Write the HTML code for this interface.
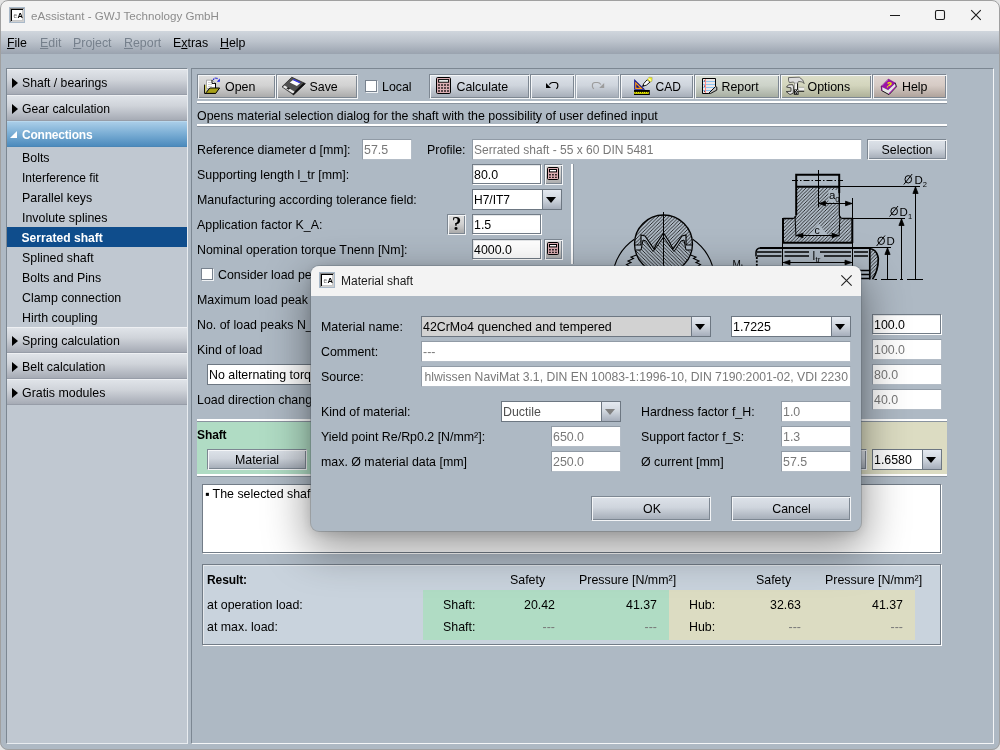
<!DOCTYPE html>
<html><head><meta charset="utf-8"><title>eAssistant - GWJ Technology GmbH</title>
<style>
*{box-sizing:border-box;margin:0;padding:0}
html,body{width:1000px;height:750px;overflow:hidden;background:#e4e4e4}
body{font-family:"Liberation Sans",Arial,sans-serif;font-size:12.4px;color:#000;position:relative}
#win{will-change:transform;position:absolute;left:0;top:0;width:1000px;height:750px;border-radius:8px;overflow:hidden;background:#aeb9c4}
#winb{position:absolute;left:0;top:0;width:1000px;height:750px;border-radius:8px;border:1px solid #a0a0a0;z-index:50;pointer-events:none}
.a{position:absolute;white-space:nowrap}
#title{left:0;top:0;width:1000px;height:31px;background:#f3f3f3}
#menu{left:0;top:31px;width:1000px;height:23px;background:linear-gradient(#d0d6dd,#bcc3cc 45%,#9aa3af)}
#menu span{position:absolute;top:5px;font-size:12.4px}
#menu u{text-decoration:underline;text-underline-offset:1px}
.dis{color:#76808c}
/* sidebar */
#side{left:6px;top:68px;width:182px;height:676px;background:#c0c8d1;border:1px solid;border-color:#7c8792 #e8ecf0 #e8ecf0 #7c8792}
.sh{position:absolute;left:0;width:180px;height:26px;background:linear-gradient(#dfe3e8,#d0d4da 40%,#a6abb5);border-top:1px solid #eef0f3;border-bottom:1px solid #979da8;line-height:26px;padding-left:15px;font-size:12.4px}
.sh.sel{font-size:12px;letter-spacing:-.2px;background:linear-gradient(#a9cde8,#7eb0d6 45%,#4c8bbd);color:#fff;font-weight:bold;border-top-color:#b8d8ee;border-bottom-color:#4a86b6}
.si{position:absolute;left:0;width:180px;height:20px;line-height:23.5px;padding-left:15px;font-size:12.4px}
.si.sel{font-size:12.1px;padding-left:14.5px;background:#0f4d8c;color:#fff;font-weight:bold}
.tri{position:absolute;left:5px;top:7.5px;width:0;height:0;border-left:6px solid #000;border-top:5px solid transparent;border-bottom:5px solid transparent}
.tri2{position:absolute;left:3px;top:9px;width:0;height:0;border-bottom:7.5px solid #fff;border-left:7.5px solid transparent}
/* main */
#main{left:191px;top:68px;width:803px;height:676px;border:1px solid;border-color:#7c8792 #f4f6f8 #f4f6f8 #7c8792}
.btn{position:absolute;height:25px;border:1px solid;border-color:#7d8792 #f2f4f6 #f2f4f6 #7d8792;box-shadow:inset 1px 1px 0 #f4f6f8,inset -1px -1px 0 #7d8792;line-height:23px;text-align:center}
.g0{background:linear-gradient(#e0e0e0,#d2d2d2 45%,#a8a8a8)}
.g1{background:linear-gradient(#dde2e9,#cfd5dd 45%,#a3abb6)}
.g2{background:linear-gradient(#d9ded6,#cdd3c9 45%,#a4ab9f)}
.g3{background:linear-gradient(#dddfca,#d3d5bd 45%,#abae96)}
.g4{background:linear-gradient(#e0d6d2,#d6cbc5 45%,#ac9f98)}
.sep{position:absolute;height:3px;border-top:2px solid #fff;border-bottom:1px solid #8a949f}
.tf{position:absolute;height:21px;background:#fff;border:1px solid;border-color:#727c87 #fff #fff #727c87;box-shadow:inset -1px -1px 0 #727c87,inset 1px 1px 0 #e4e6e8;line-height:20px;padding-left:1px;overflow:hidden}
.tf.d{color:#787878;border-color:#919ba6 #b4bdc7 #b4bdc7 #919ba6;box-shadow:none}
.lb{position:absolute;white-space:nowrap;line-height:20px;height:20px;margin-top:1px}

.bl{position:absolute;top:1px}
.bd{border-color:#98a2ad #f2f4f6 #f2f4f6 #98a2ad;box-shadow:inset 1px 1px 0 #f4f6f8,inset -1px -1px 0 #98a2ad}
.cb{position:absolute;width:13px;height:13px;background:#fff;border:1px solid;border-color:#78828e #eef1f4 #eef1f4 #78828e;box-shadow:inset -1px -1px 0 #78828e}
.sb{width:19px;height:21px}
.q{font-family:"Liberation Serif",serif;font-weight:bold;font-size:18.5px;line-height:19px}
.co{position:absolute;height:21px;background:#fff;border:1px solid #6d7782;line-height:21px;padding-left:1px;white-space:nowrap;overflow:hidden}
.co i{position:absolute;right:0;top:0;width:19px;height:19px;border-left:1px solid #6d7782;background:linear-gradient(#e4e9f0,#d2d8e0 45%,#a6aebb)}
.co i:after{content:"";position:absolute;left:3px;top:7px;border-top:6px solid #000;border-left:5.5px solid transparent;border-right:5.5px solid transparent}
.vsep{position:absolute;width:3px;border-left:2px solid #fff;border-right:1px solid #8a949f}
.r{text-align:right}
.g{color:#777}

#dlg{left:311px;top:266px;width:550px;height:265px;background:#aeb9c4;border-radius:8px;box-shadow:0 0 0 1px rgba(90,100,110,.35),0 15px 44px 4px rgba(0,0,0,.40),0 2px 12px rgba(0,0,0,.13);z-index:20}
#dtitle{left:0;top:0;width:550px;height:30px;background:#f3f3f3;border-radius:8px 8px 0 0}
.dd{color:#505050}
.dd i:after{border-top-color:#808080}

.appico{width:16px;height:16px;border:1px solid #a9b9c9;background:#fff;box-shadow:inset 1px 1px 0 #8a8a8a,inset -1px -1px 0 #d0d0d0,inset 2px 2px 0 #000,inset -2px -2px 0 #c8c8c8;font-size:7px;line-height:14px;white-space:nowrap;overflow:hidden}
.appico b{position:absolute;top:1px;font-family:"Liberation Sans",sans-serif}
.appico b:first-child{left:3.5px;color:#666;font-weight:normal;font-size:6.5px}
.appico b:last-child{left:7.5px;color:#000;font-size:7.5px}
</style></head><body>
<div id="win">
<div id="title" class="a">
<div class="a appico" style="left:9px;top:7px"><b>e</b><b>A</b></div>
<span class="a" style="left:31px;top:0;line-height:31px;font-size:11.6px;color:#8c8c8c">eAssistant - GWJ Technology GmbH</span>
<svg class="a" style="left:880px;top:0" width="120" height="31" viewBox="880 0 120 31"><path d="M890 15.5h10" stroke="#1a1a1a" stroke-width="1"/><rect x="935.5" y="10.5" width="9" height="9" rx="1.5" fill="none" stroke="#1a1a1a" stroke-width="1.1"/><path d="M971.2 10.2l9.6 9.6M980.8 10.2l-9.6 9.6" stroke="#1a1a1a" stroke-width="1.1"/></svg>
</div>
<div id="menu" class="a"><span style="left:7px"><u>F</u>ile</span><span class="dis" style="left:40px"><u>E</u>dit</span><span class="dis" style="left:73px"><u>P</u>roject</span><span class="dis" style="left:124px"><u>R</u>eport</span><span style="left:173px">E<u>x</u>tras</span><span style="left:220px"><u>H</u>elp</span></div>
<div id="side" class="a">
<div class="sh" style="top:0;font-size:12.2px"><i class="tri"></i>Shaft / bearings</div>
<div class="sh" style="top:26px;font-size:12.2px"><i class="tri"></i>Gear calculation</div>
<div class="sh sel" style="top:52px"><i class="tri2"></i>Connections</div>
<div class="si" style="top:78px">Bolts</div>
<div class="si" style="top:98px;font-size:12px">Interference fit</div>
<div class="si" style="top:118px">Parallel keys</div>
<div class="si" style="top:138px">Involute splines</div>
<div class="si sel" style="top:158px">Serrated shaft</div>
<div class="si" style="top:178px">Splined shaft</div>
<div class="si" style="top:198px">Bolts and Pins</div>
<div class="si" style="top:218px">Clamp connection</div>
<div class="si" style="top:238px">Hirth coupling</div>
<div class="sh" style="top:258px"><i class="tri"></i>Spring calculation</div>
<div class="sh" style="top:284px"><i class="tri"></i>Belt calculation</div>
<div class="sh" style="top:310px"><i class="tri"></i>Gratis modules</div>
</div>
<div id="main" class="a"></div>
<!--MAIN-->
<!-- toolbar -->
<div class="btn g0" style="left:197px;top:74px;width:79px"><span class="bl" style="left:27px">Open</span></div>
<div class="btn g0" style="left:276px;top:74px;width:82px"><span class="bl" style="left:32.5px">Save</span></div>
<div class="cb" style="left:365px;top:80px"></div><div class="lb" style="left:382px;top:76px">Local</div>
<div class="btn g1" style="left:429px;top:74px;width:101px"><span class="bl" style="left:26.5px">Calculate</span></div>
<div class="btn g1" style="left:530px;top:74px;width:45px"></div>
<div class="btn g1 bd" style="left:575px;top:74px;width:45px"></div>
<div class="btn g1" style="left:620px;top:74px;width:74px"><span class="bl" style="left:34.5px;font-size:12px">CAD</span></div>
<div class="btn g2" style="left:694px;top:74px;width:86px"><span class="bl" style="left:26.5px">Report</span></div>
<div class="btn g3" style="left:780px;top:74px;width:92px"><span class="bl" style="left:26.5px">Options</span></div>
<div class="btn g4" style="left:872px;top:74px;width:75px"><span class="bl" style="left:29px">Help</span></div>
<div class="sep" style="left:197px;top:101px;width:750px"></div>
<div class="lb" style="left:197px;top:105px">Opens material selection dialog for the shaft with the possibility of user defined input</div>
<div class="sep" style="left:197px;top:124px;width:750px"></div>
<!-- form -->
<div class="lb" style="left:197px;top:139px">Reference diameter d [mm]:</div>
<div class="tf d" style="left:362px;top:139px;width:50px">57.5</div>
<div class="lb" style="left:427px;top:139px">Profile:</div>
<div class="tf d" style="left:472px;top:139px;width:390px;font-size:12px">Serrated shaft - 55 x 60 DIN 5481</div>
<div class="btn g1" style="left:867px;top:139px;width:80px;height:21px;line-height:20px">Selection</div>
<div class="lb" style="left:197px;top:164px">Supporting length l_tr [mm]:</div>
<div class="tf" style="left:472px;top:164px;width:70px">80.0</div>
<div class="btn g0 sb" style="left:544px;top:164px"></div>
<div class="lb" style="left:197px;top:189px">Manufacturing according tolerance field:</div>
<div class="co" style="left:472px;top:189px;width:90px;font-size:12px">H7/IT7<i></i></div>
<div class="lb" style="left:197px;top:214px">Application factor K_A:</div>
<div class="btn g0 sb q" style="left:447px;top:214px">?</div>
<div class="tf" style="left:472px;top:214px;width:70px">1.5</div>
<div class="lb" style="left:197px;top:239px">Nominal operation torque Tnenn [Nm]:</div>
<div class="tf" style="left:472px;top:239px;width:70px">4000.0</div>
<div class="btn g0 sb" style="left:544px;top:239px"></div>
<div class="cb" style="left:201px;top:268px"></div><div class="lb" style="left:218px;top:264px">Consider load peaks</div>
<div class="lb" style="left:197px;top:289px">Maximum load peak Tmax [Nm]:</div>
<div class="lb" style="left:197px;top:314px">No. of load peaks N_L:</div>
<div class="lb" style="left:197px;top:339px">Kind of load</div>
<div class="co" style="left:207px;top:364px;width:200px">No alternating torque<i></i></div>
<div class="lb" style="left:197px;top:389px">Load direction changes N_W:</div>
<div class="vsep" style="left:571px;top:164px;height:100px"></div>
<div class="tf" style="left:872px;top:314px;width:70px">100.0</div>
<div class="tf d" style="left:872px;top:339px;width:70px">100.0</div>
<div class="tf d" style="left:872px;top:364px;width:70px">80.0</div>
<div class="tf d" style="left:872px;top:389px;width:70px">40.0</div>
<!-- shaft/hub panels -->
<div class="a" style="left:197px;top:419px;width:375px;height:57px;background:#b0dcc4;border-top:2px solid #fff;border-bottom:2px solid #fff"></div>
<div class="a" style="left:572px;top:419px;width:375px;height:57px;background:#dcdcc2;border-top:2px solid #fff;border-bottom:2px solid #fff"></div>
<div class="a" style="left:197px;top:421px;width:750px;height:1px;background:#8a949f"></div>
<div class="a" style="left:197px;top:476px;width:750px;height:1px;background:#8a949f"></div>
<div class="lb" style="left:197px;top:424px;font-weight:bold;font-size:12px;letter-spacing:-.1px">Shaft</div>
<div class="lb" style="left:577px;top:424px;font-weight:bold;font-size:12px;letter-spacing:-.1px">Hub</div>
<div class="btn g1" style="left:207px;top:449px;width:100px;height:21px;line-height:20px">Material</div>
<div class="btn g1" style="left:767px;top:449px;width:100px;height:21px;line-height:20px">Material</div>
<div class="co" style="left:872px;top:449px;width:70px">1.6580<i></i></div>
<!-- text area -->
<div class="a" style="left:202px;top:484px;width:740px;height:70px;background:#fff;border:1px solid;border-color:#727c87 #fff #fff #727c87;box-shadow:inset -1px -1px 0 #727c87;padding:2.4px 0 0 2px;line-height:14px">▪ The selected shaft material is not suitable for the given conditions</div>
<!-- result -->
<div class="a" style="left:202px;top:564px;width:740px;height:82px;background:#c9d3dd;border:1px solid;border-color:#727c87 #fff #fff #727c87;box-shadow:inset -1px -1px 0 #727c87,inset 1px 1px 0 #e4e8ec"></div>
<div class="a" style="left:423px;top:590px;width:246px;height:50px;background:#b0dcc4"></div>
<div class="a" style="left:669px;top:590px;width:246px;height:50px;background:#dcdcc2"></div>
<div class="lb" style="left:207px;top:569px;font-weight:bold;font-size:12px;letter-spacing:-.1px">Result:</div>
<div class="lb" style="left:207px;top:594px">at operation load:</div>
<div class="lb" style="left:207px;top:616px">at max. load:</div>
<div class="lb" style="left:510px;top:569px">Safety</div>
<div class="lb" style="left:579px;top:569px">Pressure [N/mm²]</div>
<div class="lb" style="left:756px;top:569px">Safety</div>
<div class="lb" style="left:825px;top:569px">Pressure [N/mm²]</div>
<div class="lb" style="left:443px;top:594px">Shaft:</div>
<div class="lb" style="left:443px;top:616px">Shaft:</div>
<div class="lb r" style="left:455px;top:594px;width:100px">20.42</div>
<div class="lb r" style="left:557px;top:594px;width:100px">41.37</div>
<div class="lb r g" style="left:455px;top:616px;width:100px">---</div>
<div class="lb r g" style="left:557px;top:616px;width:100px">---</div>
<div class="lb" style="left:689px;top:594px">Hub:</div>
<div class="lb" style="left:689px;top:616px">Hub:</div>
<div class="lb r" style="left:701px;top:594px;width:100px">32.63</div>
<div class="lb r" style="left:803px;top:594px;width:100px">41.37</div>
<div class="lb r g" style="left:701px;top:616px;width:100px">---</div>
<div class="lb r g" style="left:803px;top:616px;width:100px">---</div>
<!--/MAIN-->
<!--DRAW-->
<svg class="a" style="left:572px;top:160px;z-index:4" width="378" height="125" viewBox="572 160 378 125">
<defs>
<pattern id="h1" width="3.5" height="3.5" patternUnits="userSpaceOnUse"><path d="M-1 4.5L4.5 -1M-1 1L1 -1M2.5 4.5L4.5 2.5" stroke="#000" stroke-width=".74"/></pattern>
<pattern id="h2" width="3.5" height="3.5" patternUnits="userSpaceOnUse"><path d="M-1 -1L4.5 4.5M-1 2.5L1 4.5M2.5 -1L4.5 1" stroke="#000" stroke-width=".74"/></pattern>
<clipPath id="cc"><circle cx="663.5" cy="244" r="29"/></clipPath>
</defs>
<g fill="none" stroke="#000" stroke-width="1">
<!-- left cross-section -->
<g clip-path="url(#cc)">
<path d="M630 210h68v35h-5.500h-6.500v-10l-4 1l-9 13l-3-6l-6.500-10l-6.500 10l-3 6l-9-13l-4-1v10h-12z" fill="url(#h1)" stroke="none"/>
<path d="M630 280h68v-30h-12l-2-10l-3 1l-7 10.500l-3.500-4.500l-7-10l-7 10l-3.500 4.500l-7-10.500l-3-1l-2 10h-11z" fill="url(#h2)" stroke="none"/>
</g>
<circle cx="663.500" cy="244" r="29" stroke-width="1.300"/>
<path d="M634.500 245h6.500v-10l4 1l9 13l3-6l6.500-10l6.500 10l3 6l9-13l4-1v10h6.500" stroke-width="1.200"/>
<path d="M636 250h5l2-10l3 1l7 10.500l3.500-4.500l7-10l7 10l3.500 4.500l7-10.500l3-1l2 10h5" stroke-width="1"/>
<path d="M663.500 212v56" stroke-width="1"/>
<path d="M614.500 266A50.500 50.500 0 0 1 634.300 239.300M692.700 239.300A50.500 50.500 0 0 1 712.500 266" stroke-width="1.100"/>
<path d="M636.500 255l-5.500 2l2.500 1.500l-5.500 2.500l3 1.500l-4.500 2l3 2M690.500 255l5.500 2l-2.500 1.500l5.500 2.500l-3 1.500l4.500 2l-3 2" stroke-width="1.100"/>
<!-- hub section -->
<path d="M797 187.500h41.500v28l2.500 3h11v24h-68.500v-24h10l3.500-3z" fill="url(#h1)" stroke="none"/>
<path d="M809 235l9.500-11l9.500 11z" fill="#aeb9c4" stroke="none"/><path d="M828.500 190h9.500v12.500h-9.500z" fill="#aeb9c4" stroke="none"/>
<path d="M796.200 215V174.800h43V193" stroke-width="2"/>
<path d="M839.300 193v22q.5 3.500 4 3.500h9" stroke-width="1.300"/>
<path d="M796.200 215q-.5 3.500-4 3.500h-9" stroke-width="1.300"/>
<path d="M783 218v25M852.300 218v25" stroke-width="2"/>
<path d="M782 242.800h71" stroke-width="2"/>
<path d="M796 186.800h44" stroke-width="2"/>
<path d="M840 186.500h80M852 218.500h53M853 247.500h38" stroke-width="1"/>
<path d="M792 180.500h51" stroke-width="1" stroke-dasharray="6 2 1.500 2"/>
<path d="M818.500 170v37.500" stroke-width="1"/>
<path d="M795 216l1 20.500M840 216l-1 20.500" stroke-width="1"/>
<path d="M818.500 203.500h34M852.500 198v45M796 235.500h43" stroke-width="1"/>
<path d="M819 203.500l6.500-2.300v4.600zM852 203.500l-6.500-2.300v4.600zM796.500 235.500l6.500-2.300v4.600zM838.500 235.500l-6.500-2.300v4.600zM783.500 262.500l6.500-2.300v4.600zM851.500 262.500l-6.500-2.300v4.600z" fill="#000" stroke-width=".8"/>
<!-- shaft -->
<path d="M782.500 243v24M852.500 243v24" stroke-width="1"/>
<path d="M760 248h110" stroke-width="2"/>
<path d="M760 248q-3.500 .5-4 4v4.500" stroke-width="1.500"/>
<path d="M756.800 257v9" stroke-width="1.800" stroke-dasharray="2 1.500"/>
<path d="M757 252h24.500M784.500 252h24.500M820 252h31M854 252h14M757 256h24.500M784.500 256h24.500M824 256h27M854 256h14M854 270.500h15M854 274.500h15M854 278.500h16" stroke-width="1.700"/>
<path d="M783 262.500h69" stroke-width="1"/>
<path d="M869.800 248.500Q877 249.500 878.300 258.500Q878.300 271 872.500 279.300L869.800 279.300z" fill="url(#h1)" stroke="none"/>
<path d="M869.800 248.500Q877 249.500 878.300 258.500Q878.300 271 872.500 279.300" stroke-width="1.700"/>
<path d="M869.800 248v31.500" stroke-width="1.700"/>
<!-- dims -->
<path d="M915.500 187v92.500M901.500 219v60.500M887.500 248v31.500" stroke-width="1"/>
<path d="M915.500 186.800l2.600 6.700h-5.200zM901.500 218.800l2.600 6.700h-5.200zM887.500 247.800l2.600 6.700h-5.200z" fill="#000" stroke-width=".8"/>
<path d="M881 279.500h16M900 279.500h3M907 279.500h16M874.500 279.500h2.500" stroke-width="1"/>
</g>
<g font-family="Liberation Sans,sans-serif" fill="#000" font-size="11.500">
<text x="829" y="198.800" font-size="11.500">a</text><text x="835.200" y="201.800" font-size="8">0</text>
<text x="814.500" y="233.500" font-size="10.500">c</text>
<text x="812.500" y="259.500" font-size="12">l</text><text x="815.500" y="262" font-size="8">tr</text>
<text x="914.500" y="183.500">D</text><text x="922.800" y="186.500" font-size="7.500">2</text>
<text x="899.500" y="215.500">D</text><text x="908" y="218.500" font-size="7.500">1</text>
<text x="886.500" y="245">D</text>
<text x="732.500" y="267.500" font-size="10">M</text><text x="741" y="269" font-size="7">t</text>
</g>
<g fill="none" stroke="#000" stroke-width="1">
<ellipse cx="908.300" cy="179.300" rx="3.300" ry="3.700"/><path d="M903.800 184.500l8.400-10.500"/>
<ellipse cx="894.200" cy="211.300" rx="3.300" ry="3.700"/><path d="M889.600 216.500l8.400-10.500"/>
<ellipse cx="881.200" cy="240.800" rx="3.300" ry="3.700"/><path d="M876.600 246l8.400-10.500"/>
</g>
</svg>
<!--/DRAW-->
<!--ICONS-->
<svg class="a" style="left:0;top:0;z-index:5" width="1000" height="300" viewBox="0 0 1000 300" shape-rendering="geometricPrecision">
<!-- open -->
<g>
<path d="M206.5 80.2h5.7l3.3 3.2v5h-9z" fill="#fff" stroke="#8c8c8c" stroke-width=".7"/>
<path d="M208 82.5h3M208 84.5h4M208 86.5h4" stroke="#c4c4c4" stroke-width=".8"/>
<path d="M212 80v3.4h3.5" fill="none" stroke="#000" stroke-width="1"/><path d="M215.5 83v5" stroke="#000" stroke-width="1"/>
<path d="M204.6 84.6v8.9h11" fill="none" stroke="#000" stroke-width="1"/>
<path d="M205.6 85v7.6" stroke="#d8d050" stroke-width="1"/>
<path d="M206.2 92.6l3.6-4.6h9.8l-3.9 5.4h-9.4z" fill="#a8a018" stroke="#000" stroke-width="1" stroke-linejoin="round"/>
<path d="M213.2 79.8q2.2-3.2 4.8-.6" fill="none" stroke="#1c1cd8" stroke-width="1.2" stroke-dasharray="1.3 .6"/>
<path d="M219.9 78.6v3.2h-3.1z" fill="#2020f0"/>
</g>
<!-- save -->
<g>
<path d="M291.8 77.2l13.6 6.4l-11.8 11.2l-11.6-8z" fill="#505050" stroke="#2a2a2a" stroke-width=".8" stroke-linejoin="round"/>
<path d="M305.4 83.8l-11.8 11.2l-1.6-1.2l11.4-10.8z" fill="#111"/>
<path d="M293 80l7.1 3.3l-3.2 2.7l-7.1-3.4z" fill="#fff"/>
<path d="M293.6 78.9l7 3.3l-.9 1.1l-7-3.3z" fill="#3838f0"/>
<path d="M282.9 87l1.8-1.4l10 6.2l-1.7 1.7z" fill="#e8e8e8"/>
<path d="M286.3 88.2l1.8-1.2l2.2 1.4l-1.8 1.3z" fill="#222"/>
</g>
<!-- calculator big -->
<g>
<rect x="436.5" y="77.5" width="14" height="16" rx="1.2" fill="#dcaeb3" stroke="#000" stroke-width="1"/>
<rect x="438.6" y="79.6" width="10" height="2.6" fill="#fff" stroke="#000" stroke-width="1"/>
<path d="M438.2 85h1.6M441.2 85h1.6M444.2 85h1.6M447.2 85h1.6M438.2 88h1.6M441.2 88h1.6M444.2 88h1.6M447.2 88h1.6M438.2 91h1.6M441.2 91h1.6M444.2 91h1.6M447.2 91h1.6" stroke="#000" stroke-width="1.6"/>
</g>
<!-- undo -->
<path d="M546 83v5h5z" fill="#000"/>
<path d="M549.3 84.5Q550.8 82.5 552.6 82.5H555.2Q557.8 82.7 557.8 85V86.4Q557.6 87.8 556.4 88.9" fill="none" stroke="#000" stroke-width="1.15"/>
<!-- redo -->
<path d="M604.2 83v5h-5z" fill="#9c9c9c"/>
<path d="M600.9 84.5Q599.4 82.5 597.6 82.5H595Q592.4 82.7 592.4 85V86.4Q592.6 87.8 593.8 88.9" fill="none" stroke="#9c9c9c" stroke-width="1.15"/>
<!-- CAD -->
<g>
<path d="M634.2 79v10.8h11z" fill="#10108c"/>
<path d="M635.2 81.4v7.5h7.7z" fill="#ff9c18"/>
<path d="M636.3 84.3v3.5h3.6z" fill="#10108c"/>
<rect x="634" y="90" width="15.8" height="5" fill="#000"/>
<rect x="634.2" y="91.9" width="14.6" height="1.9" fill="#f4f400"/>
<path d="M635.5 91.6v1M637.5 91.6v1M639.5 91.6v1M641.5 91.2v1.6M643.5 91.6v1M645.5 91.6v1M647.5 91.6v1" stroke="#000" stroke-width=".8"/>
<path d="M642.6 86.4l1.2-2.9l3.4-3.8l2.9 2.3l-3.5 3z" fill="#fff" stroke="#000" stroke-width=".9" stroke-linejoin="round"/>
<path d="M642.4 86.6l.9-2.2l1.4 1.2z" fill="#000"/>
<path d="M647.2 79.7l1.9-2.6l3.1.4l-.2 3.8l-1.9.7z" fill="#f0f020" stroke="#777" stroke-width=".4"/>
<path d="M648.6 78.6l2.6 2" stroke="#fff" stroke-width="1"/>
</g>
<!-- report -->
<g>
<path d="M702.5 78.5h13v8l-7 7h-6z" fill="#ece6e6" stroke="#000" stroke-width="1" stroke-linejoin="miter"/>
<path d="M705.5 79v14" stroke="#ff8a8a" stroke-width="1"/>
<path d="M703 81.5h12M703 84.5h12M703 87.5h11M703 90.5h8" stroke="#8cc4f0" stroke-width="1"/>
<path d="M705.5 79v14" stroke="#ff8a8a" stroke-width="1"/>
<path d="M704.5 80.4v1M704.5 85.6v1M704.5 90.8v1" stroke="#222" stroke-width=".9"/>
<path d="M715.5 86.6l1.3.5v3l-6.4 3.4h-1.9z" fill="#c0c0c0" stroke="#000" stroke-width=".9" stroke-linejoin="round"/>
</g>
<!-- options -->
<g>
<path d="M788.5 77.6l10.8-.4l3.5 2.9l1.3 3.5l-1.6-1.6l-3.9-.6l-1.2 1.9h-2.6l-1.6-1.3l-3.8.6l-.9-2.2z" fill="#dcdcdc" stroke="#3a3a3a" stroke-width=".7" stroke-linejoin="round"/>
<rect x="794.8" y="83.3" width="2.6" height="6.4" fill="#f4f4f4"/><path d="M797.6 83.3v6.4" stroke="#000" stroke-width="1"/><path d="M794.6 83.3v6.4" stroke="#777" stroke-width=".6"/>
<rect x="793.8" y="89.4" width="4.8" height="5.4" fill="#1a1a1a"/>
<path d="M795 90.6h1M797 90.6h1M796 91.8h1M795 93h1M797 93h1" stroke="#ddd" stroke-width="1"/>
<path d="M786.5 87.1l1.9-2.2l4.2-.3l.9 2.2l-.3 6.4l-3.2 1.3l-3.8-2.9l4.8-.3v-3.5z" fill="#e4e4e4" stroke="#222" stroke-width=".8" stroke-linejoin="round"/>
<rect x="798.6" y="87.4" width="5.5" height="3.6" fill="#f0f0f0"/><path d="M798.6 91.2h5.6" stroke="#000" stroke-width="1"/><path d="M798.6 87.3h5.6" stroke="#888" stroke-width=".6"/>
</g>
<!-- help -->
<g>
<path d="M881.3 86.4l.4 4.2l7.3 4l7.4-7.8l-1-3.6z" fill="#e6e6e6" stroke="#000" stroke-width=".9" stroke-linejoin="round"/>
<path d="M889 94.6l7.4-7.8l-.4-1l-7.4 7.8z" fill="#9c12a8"/>
<path d="M888.4 79l6.9 4l-7.1 6.8l-7-3.5z" fill="#9c12a8" stroke="#6a0a76" stroke-width=".5"/>
<path d="M881.3 86.3v4l1 .6v-4z" fill="#9c12a8"/>
<path d="M882 85.4l6.2-5.8" stroke="#d8b0dc" stroke-width=".8" stroke-dasharray=".9 .9"/>
<path d="M887.6 83.6q1.6-1.6 3.2-.6q.8 1-.8 1.9l-1.6.9" fill="none" stroke="#f0f000" stroke-width="1.4"/>
<path d="M887 86.6l1 .5" stroke="#f0f000" stroke-width="1.4"/>
</g>
<!-- small calculators -->
<g id="sc1">
<rect x="547.5" y="167.5" width="11" height="12" rx="1" fill="#dcaeb3" stroke="#000" stroke-width="1"/>
<rect x="549.5" y="169.5" width="7" height="2.4" fill="#fff" stroke="#000" stroke-width="1"/>
<path d="M549.2 174.8h1.5M552.2 174.8h1.5M555.2 174.8h1.5M549.2 177.4h1.5M552.2 177.4h1.5M555.2 177.4h1.5" stroke="#000" stroke-width="1.4"/>
</g>
<use href="#sc1" y="75"/>
</svg>
<!--/ICONS-->
<!--DLG-->
<div id="dlg" class="a">
<div id="dtitle" class="a"><div class="a appico" style="left:8px;top:6px"><b>e</b><b>A</b></div><span class="a" style="left:30px;top:0;line-height:30px;font-size:12px;color:#1a1a1a">Material shaft</span>
<svg class="a" style="left:530px;top:9px" width="11" height="11" viewBox="0 0 10 10"><path d="M.3 .3L9.7 9.7M9.7 .3L.3 9.7" stroke="#222" stroke-width="1" fill="none"/></svg></div>
<div class="lb" style="left:10px;top:50px">Material name:</div>
<div class="co" style="left:110px;top:50px;width:290px;background:#d2d2d2">42CrMo4 quenched and tempered<i></i></div>
<div class="co" style="left:420px;top:50px;width:120px">1.7225<i></i></div>
<div class="lb" style="left:10px;top:75px">Comment:</div>
<div class="tf d" style="left:110px;top:75px;width:430px">---</div>
<div class="lb" style="left:10px;top:100px">Source:</div>
<div class="tf d" style="left:110px;top:100px;width:430px;font-size:12.2px;padding-left:2.5px">hlwissen NaviMat 3.1, DIN EN 10083-1:1996-10, DIN 7190:2001-02, VDI 2230</div>
<div class="lb" style="left:10px;top:135px">Kind of material:</div>
<div class="co dd" style="left:190px;top:135px;width:120px">Ductile<i></i></div>
<div class="lb" style="left:10px;top:160px">Yield point Re/Rp0.2 [N/mm²]:</div>
<div class="tf d" style="left:240px;top:160px;width:70px">650.0</div>
<div class="lb" style="left:10px;top:185px">max. Ø material data [mm]</div>
<div class="tf d" style="left:240px;top:185px;width:70px">250.0</div>
<div class="lb" style="left:330px;top:135px">Hardness factor f_H:</div>
<div class="tf d" style="left:470px;top:135px;width:70px">1.0</div>
<div class="lb" style="left:330px;top:160px">Support factor f_S:</div>
<div class="tf d" style="left:470px;top:160px;width:70px">1.3</div>
<div class="lb" style="left:330px;top:185px">Ø current [mm]</div>
<div class="tf d" style="left:470px;top:185px;width:70px">57.5</div>
<div class="btn g1" style="left:280px;top:230px;width:120px;line-height:24px;padding-left:2px">OK</div>
<div class="btn g1" style="left:420px;top:230px;width:120px;line-height:24px;padding-left:1px">Cancel</div>
</div>
<!--/DLG-->
</div>
<div id="winb"></div>
</body></html>
